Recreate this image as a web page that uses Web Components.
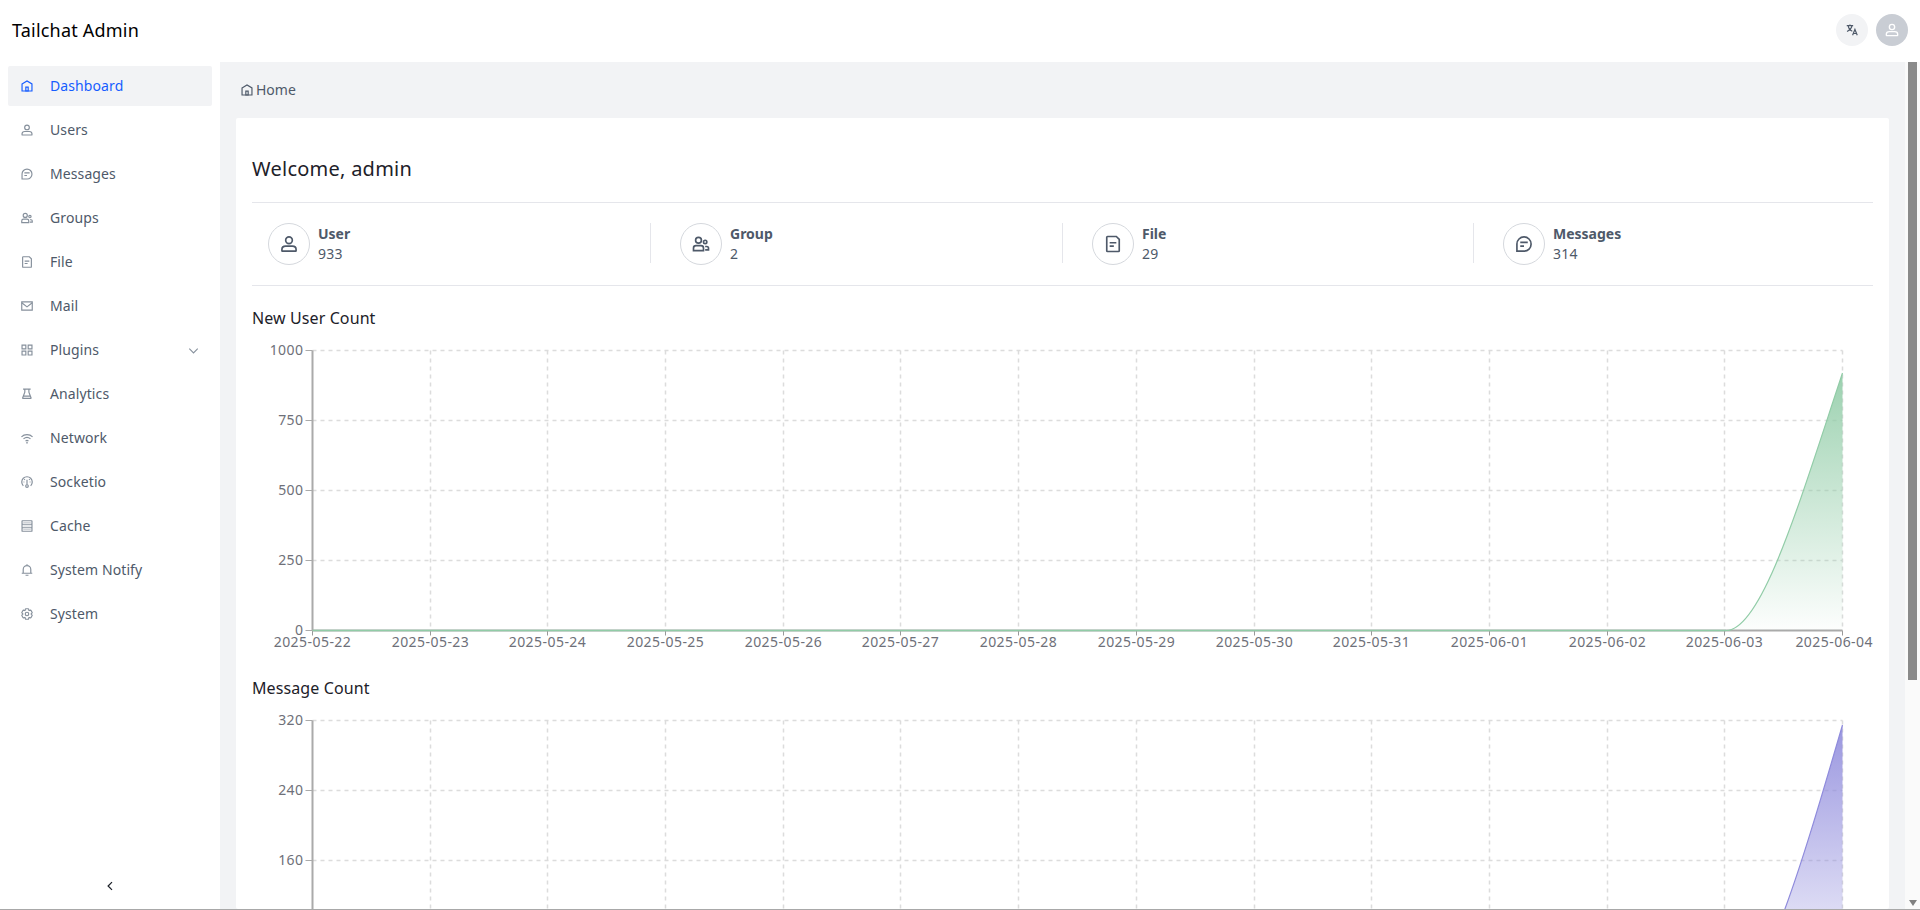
<!DOCTYPE html>
<html><head><meta charset="utf-8"><style>
html,body{margin:0;height:910px;overflow:hidden;background:#fff;font-family:"Noto Sans",sans-serif}
</style></head><body>
<admin-app></admin-app>
<script>
const ICONS={
home:'<path d="M7 17 24 7l17 10v24H7V17Z"/><path d="M20 28h8v13h-8V28Z"/>',
user:'<path d="M7 37c0-4.97 4.03-8 9-8h16c4.97 0 9 3.03 9 8v3a1 1 0 0 1-1 1H8a1 1 0 0 1-1-1v-3Z"/><circle cx="24" cy="15" r="8"/>',
message:'<path d="M15 20h18m-18 9h9M7 41h17.63C33.67 41 41 33.67 41 24.63V24c0-9.389-7.611-17-17-17S7 14.611 7 24v17Z"/>',
group:'<circle cx="18" cy="15" r="7"/><circle cx="34" cy="19" r="4"/><path d="M6 34a6 6 0 0 1 6-6h12a6 6 0 0 1 6 6v6H6v-6ZM34 30h4a4 4 0 0 1 4 4v4h-8"/>',
file:'<path d="M16 21h16m-16 8h10m11 13H11a2 2 0 0 1-2-2V8a2 2 0 0 1 2-2h21l7 7v27a2 2 0 0 1-2 2Z"/>',
mail:'<path d="M6 10h36v28H6V10Z"/><path d="m6 13 18 14 18-14"/>',
apps:'<path d="M7 7h13v13H7zM28 7h13v13H28zM7 28h13v13H7zM28 28h13v13H28z"/>',
flask:'<path d="M10.5 7h6m0 0v10.5l-5.25 14-2.344 6.25a1 1 0 0 0 .937 1.35h27.315a1 1 0 0 0 .937-1.35L35.75 31.5l-5.25-14V7m-14 0h14m0 0h6M11.25 31.5h25.5"/>',
wifi:'<path d="M5 20c10-10 28-10 38 0M12 27c7-6 17-6 24 0M19 34c3-2 7-2 10 0"/><circle cx="24" cy="40" r="1" />',
gauge:'<path d="M36.600 37C40.300 33.300 42 28.600 42 24c0-10-8-18-18-18S6 14 6 24c0 4.600 1.700 9.300 5.400 13"/><path d="M24 33V16M15 24h-3M36 24h-3M17 17l-2.500-2.500M31 17l2.500-2.500"/><circle cx="24" cy="38" r="4.500"/>',
storage:'<path d="M7 18h34v12H7V18ZM40 6H8a1 1 0 0 0-1 1v11h34V7a1 1 0 0 0-1-1ZM7 30h34v11a1 1 0 0 1-1 1H8a1 1 0 0 1-1-1V30Z"/><path d="M11 12h26M11 24h26M11 36h26" stroke-width="3" opacity=".45"/>',
bell:'<path d="M24 9c7.18 0 13 5.82 13 13v13H11V22c0-7.18 5.82-13 13-13Zm0 0V4M6 35h36M19 42h10"/>',
gear:'<path d="M18.797 6.732A1 1 0 0 1 19.76 6h8.48a1 1 0 0 1 .964.732l1.285 4.628a1 1 0 0 0 1.213.7l4.651-1.2a1 1 0 0 1 1.116.468l4.24 7.344a1 1 0 0 1-.153 1.2L38.193 23.3a1 1 0 0 0 0 1.402l3.364 3.427a1 1 0 0 1 .153 1.2l-4.24 7.344a1 1 0 0 1-1.116.468l-4.65-1.2a1 1 0 0 0-1.214.7l-1.285 4.628a1 1 0 0 1-.964.732h-8.48a1 1 0 0 1-.963-.732L17.51 36.64a1 1 0 0 0-1.213-.7l-4.65 1.2a1 1 0 0 1-1.116-.468l-4.24-7.344a1 1 0 0 1 .153-1.2L9.809 24.7a1 1 0 0 0 0-1.402l-3.364-3.427a1 1 0 0 1-.153-1.2l4.24-7.344a1 1 0 0 1 1.116-.468l4.65 1.2a1 1 0 0 0 1.213-.7l1.286-4.628Z"/><path d="M30 24a6 6 0 1 1-12 0 6 6 0 0 1 12 0Z"/>',
down:'<path d="M39.600 17.443 24.043 33 8.487 17.443"/>',
left:'<path d="M32 8.400 16.444 23.956 32 39.513"/>',
lang:'<path d="M6 9h22M17 5v4M11 9c1 9 7 16 14 19M24 9c-1 8-7 15-17 20"/><path d="m26 42 8-20 8 20M29 36h10"/>'
};
class AIcon extends HTMLElement{connectedCallback(){
 const s=this.getAttribute('size')||14,w=this.getAttribute('w')||4;
 this.attachShadow({mode:'open'}).innerHTML=`<style>:host{display:inline-flex;flex:none;width:${s}px;height:${s}px}svg{width:100%;height:100%;display:block}</style><svg viewBox="0 0 48 48" fill="none" stroke="currentColor" stroke-width="${w}">${ICONS[this.getAttribute('name')]}</svg>`;
}}
customElements.define('a-icon',AIcon);

class TopBar extends HTMLElement{connectedCallback(){
 this.attachShadow({mode:'open'}).innerHTML=`<style>
 :host{display:flex;align-items:center;height:62px;padding:0 12px;box-sizing:border-box;flex:none;background:#fff}
 .t{font-size:18px;color:#000;flex:1;line-height:26px;margin-top:-2px;letter-spacing:.2px}
 .r{display:flex;gap:8px;margin-top:-2px}
 .b{width:32px;height:32px;border-radius:50%;display:flex;align-items:center;justify-content:center}
 .l{background:#f2f3f5;color:#4e5969}.a{background:#c9cdd4;color:#fff}
 </style><div class="t">Tailchat Admin</div><div class="r"><div class="b l"><a-icon name="lang" size="14" w="4"></a-icon></div><div class="b a"><a-icon name="user" size="16" w="4"></a-icon></div></div>`;
}}
customElements.define('top-bar',TopBar);

class NavItem extends HTMLElement{connectedCallback(){
 const a=this.hasAttribute('active'),arrow=this.hasAttribute('arrow');
 this.attachShadow({mode:'open'}).innerHTML=`<style>
 :host{display:flex;align-items:center;height:40px;padding:0 12px;border-radius:2px;font-size:14px;letter-spacing:.1px;color:${a?'#165dff':'#4e5969'};background:${a?'#f2f3f5':'transparent'}}
 .i{display:flex;margin-right:16px;color:${a?'#165dff':'#86909c'}}
 .x{flex:1;line-height:20px}.c{display:flex;color:#86909c}
 </style><span class="i"><a-icon name="${this.getAttribute('icon')}" size="14"></a-icon></span><span class="x"><slot></slot></span>${arrow?'<span class="c"><a-icon name="down" size="13"></a-icon></span>':''}`;
}}
customElements.define('nav-item',NavItem);

class SideNav extends HTMLElement{connectedCallback(){
 const items=[['home','Dashboard'],['user','Users'],['message','Messages'],['group','Groups'],['file','File'],['mail','Mail'],['apps','Plugins'],['flask','Analytics'],['wifi','Network'],['gauge','Socketio'],['storage','Cache'],['bell','System Notify'],['gear','System']];
 this.attachShadow({mode:'open'}).innerHTML=`<style>
 :host{display:flex;flex-direction:column;width:220px;flex:none;box-sizing:border-box;padding:4px 8px 0;background:#fff;position:relative}
 nav{display:flex;flex-direction:column;gap:4px;flex:1}
 .col{height:46px;display:flex;align-items:center;justify-content:center;color:#1d2129;box-sizing:border-box}
 </style><nav>${items.map((it,i)=>`<nav-item icon="${it[0]}" ${i==0?'active':''} ${it[0]=='apps'?'arrow':''}>${it[1]}</nav-item>`).join('')}</nav><div class="col"><a-icon name="left" size="12" w="5"></a-icon></div>`;
}}
customElements.define('side-nav',SideNav);

class StatItem extends HTMLElement{connectedCallback(){
 this.attachShadow({mode:'open'}).innerHTML=`<style>
 :host{display:flex;align-items:center;height:42px;box-sizing:border-box;gap:8px;color:#4e5969;position:relative}
 :host(:not(:last-child))::after{content:"";position:absolute;right:0;top:0;width:1px;height:40px;background:#e5e6eb}
 .c{width:42px;height:42px;border:1px solid #d5d8dd;border-radius:50%;box-sizing:border-box;display:flex;align-items:center;justify-content:center;flex:none}
 .d{margin-top:-2px}
 .t{font-size:14px;font-weight:700;line-height:21px;color:#4e5969}.v{font-size:14px;line-height:21px;margin-top:-1px;letter-spacing:.2px}
 </style><div class="c"><a-icon name="${this.getAttribute('icon')}" size="20"></a-icon></div><div class="d"><div class="t">${this.getAttribute('label')}</div><div class="v">${this.getAttribute('value')}</div></div>`;
}}
customElements.define('stat-item',StatItem);

class LineChart extends HTMLElement{connectedCallback(){
 const W=1666,H=this.hasAttribute('cut')?200:336,L=60.5,R=1590.5,T=10.5,B=290.5;
 const color=this.getAttribute('color'),ylab=this.getAttribute('y').split(','),id=color.slice(1);
 const xl=['05-22','05-23','05-24','05-25','05-26','05-27','05-28','05-29','05-30','05-31','06-01','06-02','06-03','06-04'];
 const dx=(R-L)/13;let g='';
 for(let i=1;i<14;i++){const x=Math.round(L+dx*i-.5)+.5;g+=`<path d="M${x} ${T}V${B}" class="gr"/>`;}
 for(let i=0;i<4;i++){const y=T+70*i;g+=`<path d="M${L} ${y}H${R}" class="gr"/>`;}
 ylab.forEach((t,i)=>{const y=T+70*i;g+=`<path d="M${L-7} ${y}H${L}" stroke="#aaa"/><text x="${L-9}" y="${y+4}" text-anchor="end">${t}</text>`;});
 g+=`<path d="M${L} ${T}V${B}" stroke="#aaa" stroke-width="2"/>`;
 if(!this.hasAttribute('cut')){
  xl.forEach((t,i)=>{const x=Math.round(L+dx*i-.5)+.5;const last=i==13;g+=`<path d="M${x} ${B}v5" stroke="#999"/><text x="${last?1621:x}" y="${B+16}" text-anchor="${last?'end':'middle'}">2025-${t}</text>`;});
  g+=`<path d="M${L} ${B}H${R}" stroke="#aaa" stroke-width="2"/>`;
 }
 const ex=+this.getAttribute('end');
 const curve=`M1474 ${B} C1510 ${B} 1548 ${B-130} ${R} ${ex}`;
 this.attachShadow({mode:'open'}).innerHTML=`<style>
 :host{display:block;flex:none}
 .t{font-size:16px;line-height:24px;color:#1d2129;letter-spacing:.1px}
 svg{display:block;margin-top:10px}
 text{font:14px "Noto Sans",sans-serif;fill:#6e7079;letter-spacing:.45px}
 .gr{stroke:#dcdcdc;stroke-width:1.500;stroke-dasharray:4 4;fill:none}
 </style><div class="t">${this.getAttribute('title')}</div>
 <svg width="${W}" height="${H}" viewBox="0 0 ${W} ${H}"><defs><linearGradient id="g${id}" gradientUnits="userSpaceOnUse" x1="0" x2="0" y1="${ex}" y2="${B}"><stop offset="0" stop-color="${color}" stop-opacity=".9"/><stop offset="1" stop-color="${color}" stop-opacity=".02"/></linearGradient></defs>
 ${g}<path d="${curve} L${R} ${B} Z" fill="url(#g${id})"/><path d="M${L} ${B}H1474" stroke="${color}" stroke-width="1.500"/><path d="${curve}" stroke="${color}" stroke-width="1.200" fill="none"/></svg>`;
}}
customElements.define('line-chart',LineChart);

class DashCard extends HTMLElement{connectedCallback(){
 this.attachShadow({mode:'open'}).innerHTML=`<style>
 :host{display:block;background:#fff;padding:0 16px;box-sizing:border-box;border-radius:2px;flex:1;min-height:0;overflow:hidden;color:#1d2129}
 h1{font-size:20px;font-weight:400;margin:0;height:85px;line-height:30px;padding-top:36px;box-sizing:border-box;border-bottom:1px solid #e5e6eb;color:#1d2129;letter-spacing:.25px}
 .s{display:grid;grid-template-columns:383px 383px 382px 1fr;column-gap:29px;padding:20px 0 20px 16px;height:83px;box-sizing:border-box;border-bottom:1px solid #e5e6eb}
 .charts{display:flex;flex-direction:column;padding-top:20px}
 </style><h1>Welcome, admin</h1>
 <div class="s"><stat-item icon="user" label="User" value="933"></stat-item><stat-item icon="group" label="Group" value="2"></stat-item><stat-item icon="file" label="File" value="29"></stat-item><stat-item icon="message" label="Messages" value="314"></stat-item></div>
 <div class="charts"><line-chart title="New User Count" color="#91cca7" y="1000,750,500,250,0" end="33"></line-chart><line-chart cut title="Message Count" color="#8f8bdc" y="320,240,160" end="15"></line-chart></div>`;
}}
customElements.define('dash-card',DashCard);

class ScrollRail extends HTMLElement{connectedCallback(){
 this.attachShadow({mode:'open'}).innerHTML=`<style>
 :host{display:flex;flex-direction:column;width:15px;flex:none;background:#fafafa;align-items:center;box-sizing:border-box}
 .th{width:9px;height:618px;background:#8a8a8a;flex:none}
 .sp{flex:1}
 .a{width:0;height:0;border-left:4.500px solid transparent;border-right:4.500px solid transparent;border-top:6px solid #808080;margin-bottom:3px}
 </style><div class="th"></div><div class="sp"></div><div class="a"></div>`;
}}
customElements.define('scroll-rail',ScrollRail);

class AdminApp extends HTMLElement{connectedCallback(){
 this.attachShadow({mode:'open'}).innerHTML=`<style>
 :host{display:flex;flex-direction:column;height:910px;box-sizing:border-box;border-bottom:1px solid #a8a8a8;overflow:hidden}
 .m{display:flex;flex:1;min-height:0}
 .body{flex:1;min-width:0;background:#f2f3f5;padding:0 16px;display:flex;flex-direction:column;min-height:0}
 .bc{height:56px;flex:none;display:flex;align-items:center;gap:2px;font-size:14px;color:#4e5969;padding-left:4px}
 .bc span{margin-top:-2px}
 </style><top-bar></top-bar><div class="m"><side-nav></side-nav><div class="body"><div class="bc"><a-icon name="home" size="14"></a-icon><span>Home</span></div><dash-card></dash-card></div><scroll-rail></scroll-rail></div>`;
}}
customElements.define('admin-app',AdminApp);
</script>
</body></html>
